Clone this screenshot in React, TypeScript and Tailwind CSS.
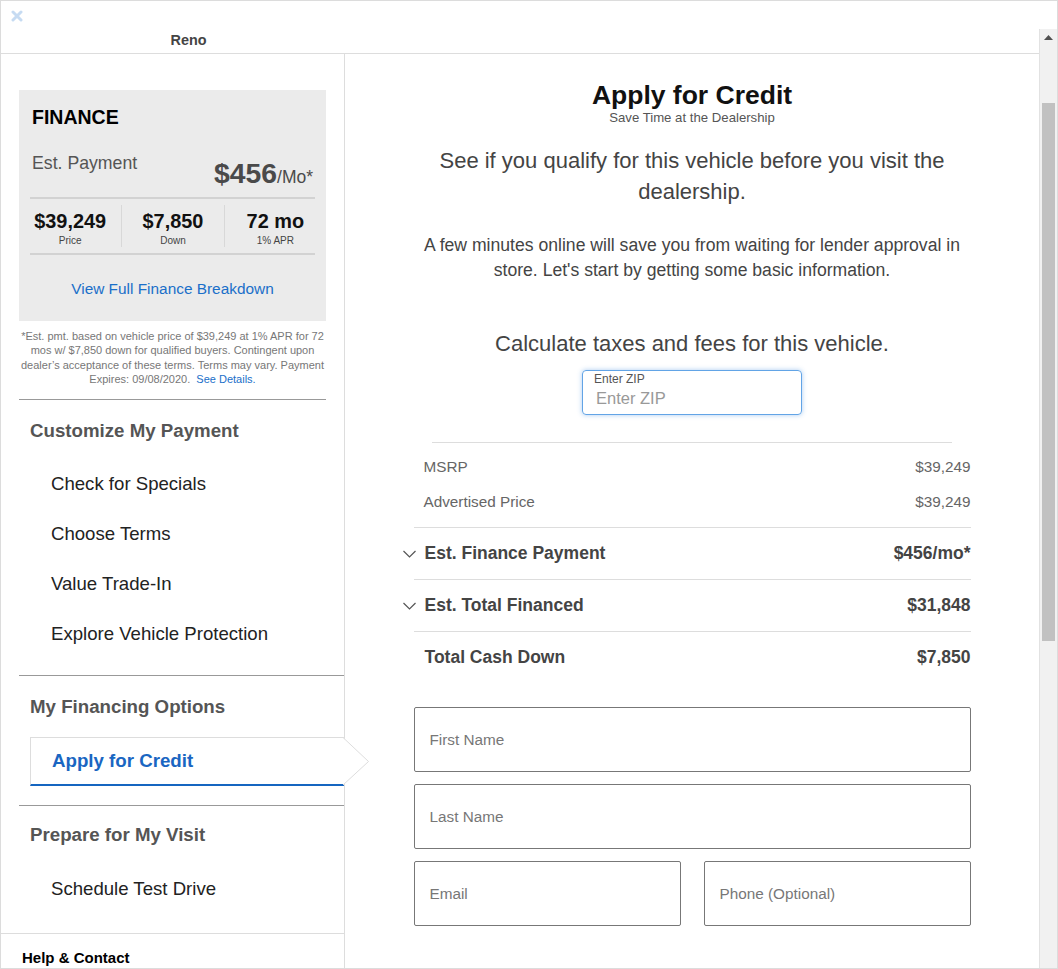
import React from 'react';

const stats = [
  { value: '$39,249', label: 'Price' },
  { value: '$7,850', label: 'Down' },
  { value: '72 mo', label: '1% APR' },
];

const customizeItems = ['Check for Specials', 'Choose Terms', 'Value Trade-In', 'Explore Vehicle Protection'];

function Chevron() {
  return (
    <svg
      width="13"
      height="8"
      viewBox="0 0 13 8"
      fill="none"
      stroke="#555"
      strokeWidth="1.2"
      className="absolute left-[-11px] top-1/2 -translate-y-1/2"
    >
      <path d="M0.5 1 L6.5 7 L12.5 1" />
    </svg>
  );
}

function FinanceCard() {
  return (
    <div className="w-[307px] bg-[#ebebeb] pt-[15px] pb-[22px]">
      <div className="px-[13px] text-[19.5px] leading-[24px] font-bold text-black">FINANCE</div>
      <div className="px-[13px] mt-[23px] h-[38px] flex justify-between items-start">
        <span className="text-[17.7px] leading-[22px] text-[#555]">Est. Payment</span>
        <span className="mt-[4px] h-[34px] flex items-baseline text-[#4a4a4a]">
          <span className="text-[28.3px] leading-[34px] font-bold">$456</span>
          <span className="text-[17.5px] leading-[34px]">/Mo*</span>
        </span>
      </div>
      <div className="mx-[11px] mt-[7px] h-[2px] bg-[#d2d2d2]" />
      <div className="grid grid-cols-3 py-[6px]">
        {stats.map((s, i) => (
          <div
            key={s.label}
            className={i > 0 ? 'h-[42px] pt-[4px] flex flex-col items-center border-l border-[#d8d8d8]' : 'h-[42px] pt-[4px] flex flex-col items-center'}
          >
            <div className="text-[19.9px] leading-[24px] font-bold text-[#111]">{s.value}</div>
            <div className="mt-[2px] text-[10px] leading-[12px] text-[#444]">{s.label}</div>
          </div>
        ))}
      </div>
      <div className="mx-[11px] h-[2px] bg-[#d2d2d2]" />
      <div className="mt-[24px] text-center text-[15.4px] leading-[20px] text-[#1a6fc9]">View Full Finance Breakdown</div>
    </div>
  );
}

function Sidebar() {
  return (
    <div className="w-[344px] shrink-0 border-r border-[#dddddd] flex flex-col">
      <div className="pl-[18px]">
        <div className="mt-[36px]">
          <FinanceCard />
        </div>
        <p className="w-[307px] mt-[7.5px] text-center text-[11px] leading-[14.6px] text-[#777]">
          *Est. pmt. based on vehicle price of $39,249 at 1% APR for 72 mos w/ $7,850 down for qualified buyers. Contingent upon dealer’s acceptance of these terms. Terms may vary. Payment Expires: 09/08/2020.{' '}
          <span className="pl-[3px] text-[#1a6fc9]">See Details.</span>
        </p>
        <div className="w-[307px] mt-[12px] h-px bg-[#999]" />

        <div className="mt-[19px] pl-[11px] text-[18.7px] leading-[24px] font-bold text-[#555]">Customize My Payment</div>
        <div className="mt-[16px]">
          {customizeItems.map((item) => (
            <div key={item} className="h-[50px] flex items-center pl-[32px] text-[18.6px] text-[#222]">
              {item}
            </div>
          ))}
        </div>
        <div className="mt-[16px] h-px bg-[#999]" />

        <div className="mt-[19px] pl-[11px] text-[18.7px] leading-[24px] font-bold text-[#555]">My Financing Options</div>
        <div className="relative mt-[18px] ml-[11px] h-[49px] border-t border-l border-b-2 border-t-[#dddddd] border-l-[#dddddd] border-b-[#1565c0] flex items-center pl-[21px]">
          <span className="text-[18.7px] font-bold text-[#1a66c2]">Apply for Credit</span>
          <svg
            width="27"
            height="50"
            viewBox="0 0 27 50"
            className="absolute left-[calc(100%-1px)] top-[-1px] z-10"
          >
            <polygon points="0,0.5 25.5,24.5 0,48" fill="#fff" />
            <polyline points="0,0.5 25.5,24.5 0,48" fill="none" stroke="#dddddd" strokeWidth="1" />
          </svg>
        </div>
        <div className="mt-[19px] h-px bg-[#999]" />

        <div className="mt-[17px] pl-[11px] text-[18.7px] leading-[24px] font-bold text-[#555]">Prepare for My Visit</div>
        <div className="mt-[17px] h-[50px] flex items-center pl-[32px] text-[18.6px] text-[#222]">Schedule Test Drive</div>
      </div>
      <div className="mt-[19px] h-px bg-[#dddddd]" />
      <div className="mt-[14px] pl-[21px] text-[15px] leading-[20px] font-bold text-black">Help &amp; Contact</div>
    </div>
  );
}

function SummaryTable() {
  return (
    <div>
      <div className="w-[520px] mx-auto h-px bg-[#dddddd]" />
      <div className="pt-[7px] pb-[7px] text-[15.3px] text-[#666]">
        <div className="h-[35px] flex items-center justify-between pl-[10px]">
          <span>MSRP</span>
          <span>$39,249</span>
        </div>
        <div className="h-[35px] flex items-center justify-between pl-[10px]">
          <span>Advertised Price</span>
          <span>$39,249</span>
        </div>
      </div>
      <div className="border-t border-[#dddddd] h-[52px] relative flex items-center justify-between pl-[11px] text-[17.5px] font-bold text-[#444]">
        <Chevron />
        <span>Est. Finance Payment</span>
        <span>$456/mo*</span>
      </div>
      <div className="border-t border-[#dddddd] h-[52px] relative flex items-center justify-between pl-[11px] text-[17.5px] font-bold text-[#444]">
        <Chevron />
        <span>Est. Total Financed</span>
        <span>$31,848</span>
      </div>
      <div className="border-t border-[#dddddd] h-[52px] flex items-center justify-between pl-[11px] text-[17.5px] font-bold text-[#444]">
        <span>Total Cash Down</span>
        <span>$7,850</span>
      </div>
    </div>
  );
}

function Field({ placeholder }: { placeholder: string }) {
  return (
    <input
      readOnly
      placeholder={placeholder}
      className="w-full h-[65px] border border-[#777] rounded-[2px] pl-[15px] text-[15.3px] text-[#333] placeholder:text-[#777] outline-none bg-white"
    />
  );
}

function MainPanel() {
  return (
    <div className="flex-1 min-w-0">
      <div className="w-[557px] mx-auto pt-[26px] text-center">
        <h1 className="text-[26.5px] leading-[30px] font-bold text-[#111]">Apply for Credit</h1>
        <div className="text-[13.2px] leading-[16px] text-[#555]">Save Time at the Dealership</div>
        <p className="mt-[18.5px] text-[22px] leading-[31px] text-[#444]">
          See if you qualify for this vehicle before you visit the dealership.
        </p>
        <p className="mt-[26px] text-[17.6px] leading-[25px] text-[#444]">
          A few minutes online will save you from waiting for lender approval in store. Let's start by getting some basic information.
        </p>
        <p className="mt-[45px] text-[22px] leading-[31px] text-[#444]">Calculate taxes and fees for this vehicle.</p>
        <div className="mt-[11.5px] mx-auto w-[220px] h-[45px] border border-[#62a4e6] rounded-[4px] shadow-[0_0_5px_rgba(66,139,222,0.45)] text-left pt-[1px]">
          <div className="pl-[11px] text-[12px] leading-[14px] text-[#555]">Enter ZIP</div>
          <div className="pl-[13px] mt-[2px] text-[16.5px] leading-[20px] text-[#999]">Enter ZIP</div>
        </div>
      </div>
      <div className="w-[557px] mx-auto mt-[27px]">
        <SummaryTable />
        <div className="mt-[24px] flex flex-col gap-[12px]">
          <Field placeholder="First Name" />
          <Field placeholder="Last Name" />
          <div className="grid grid-cols-2 gap-[23px]">
            <Field placeholder="Email" />
            <Field placeholder="Phone (Optional)" />
          </div>
        </div>
      </div>
    </div>
  );
}

function Scrollbar() {
  return (
    <div className="w-[17px] shrink-0 bg-[#f1f1f1] flex flex-col">
      <div className="h-[17px] flex items-center justify-center">
        <svg width="9" height="5" viewBox="0 0 9 5">
          <polygon points="4.5,0 9,5 0,5" fill="#505050" />
        </svg>
      </div>
      <div className="mt-[57px] ml-[2px] w-[13px] h-[538px] bg-[#c1c1c1]" />
    </div>
  );
}

export default function App() {
  return (
    <div className="w-[1058px] h-[969px] overflow-hidden bg-white border border-[#dcdcdc] flex flex-col font-['Liberation_Sans',Arial,sans-serif]">
      <div className="h-[28px] shrink-0 relative">
        <svg width="12" height="12" viewBox="0 0 12 12" className="absolute left-[10px] top-[9px]">
          <path d="M2 2 L10 10 M10 2 L2 10" stroke="#c6dbf2" strokeWidth="3" strokeLinecap="round" />
        </svg>
      </div>
      <div className="flex flex-1 min-h-0">
        <div className="flex-1 min-w-0 border-r border-[#e2e2e2] flex flex-col">
          <div className="h-[25px] shrink-0 border-b border-[#dddddd] flex items-center">
            <div className="w-[375px] text-center text-[14.4px] font-bold text-[#444]">Reno</div>
          </div>
          <div className="flex flex-1 min-h-0">
            <Sidebar />
            <MainPanel />
          </div>
        </div>
        <Scrollbar />
      </div>
    </div>
  );
}
